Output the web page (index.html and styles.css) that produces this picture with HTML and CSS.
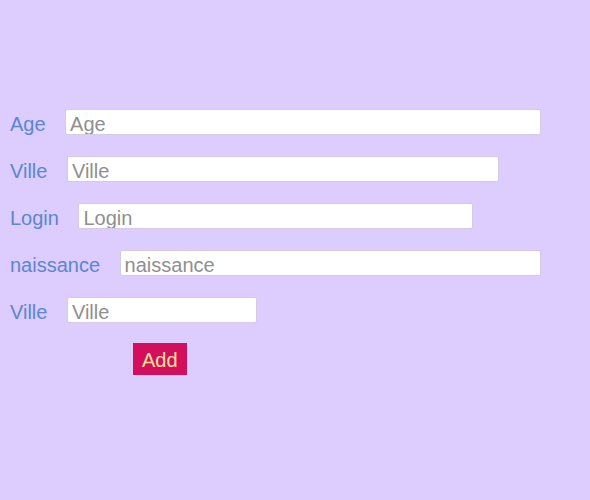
FILE: index.html
```html
<!DOCTYPE html>
<html>
<head>
<meta charset="utf-8">
<link rel="stylesheet" href="styles.css">
</head>
<body>
<form class="form">
  <div class="row"><label class="lbl">Age</label><input class="field w-age" placeholder="Age"></div>
  <div class="row"><label class="lbl">Ville</label><input class="field w-ville" placeholder="Ville"></div>
  <div class="row"><label class="lbl">Login</label><input class="field w-login" placeholder="Login"></div>
  <div class="row"><label class="lbl">naissance</label><input class="field w-naiss" placeholder="naissance"></div>
  <div class="row"><label class="lbl">Ville</label><input class="field w-ville2" placeholder="Ville"></div>
  <div class="actions"><button type="button" class="btn">Add</button></div>
</form>
</body>
</html>
```
FILE: styles.css
```css
html, body {
  margin: 0;
  padding: 0;
  background: #dccdfe;
  font-family: "Liberation Sans", Arial, sans-serif;
}
.form {
  display: flex;
  flex-direction: column;
  gap: 21px;
  padding: 109px 0 0 10px;
}
.row {
  display: flex;
  align-items: flex-start;
  height: 26px;
}
.lbl {
  font-size: 20px;
  line-height: 26px;
  padding-top: 2px;
  color: #5a86d3;
  margin-right: 19.5px;
}
.field {
  box-sizing: border-box;
  height: 26px;
  border: 1px solid #d3cbe6;
  border-radius: 2px;
  background: #fff;
  font-family: "Liberation Sans", Arial, sans-serif;
  font-size: 20px;
  padding: 4px 4px 0 4px;
  color: #333;
  outline: none;
}
.field::placeholder {
  color: #8f8f8f;
}
.w-age { width: 476px; }
.w-ville { width: 432px; }
.w-login { width: 395px; }
.w-naiss { width: 421px; }
.w-ville2 { width: 190px; }
.actions {
  display: flex;
  padding-left: 123px;
  margin-top: -1px;
}
.btn {
  font-family: "Liberation Sans", Arial, sans-serif;
  font-size: 20px;
  color: #ffe39a;
  background: #d30e5c;
  border: none;
  border-radius: 0;
  height: 32px;
  padding: 1px 9px 0 9px;
  line-height: 32px;
}
```
